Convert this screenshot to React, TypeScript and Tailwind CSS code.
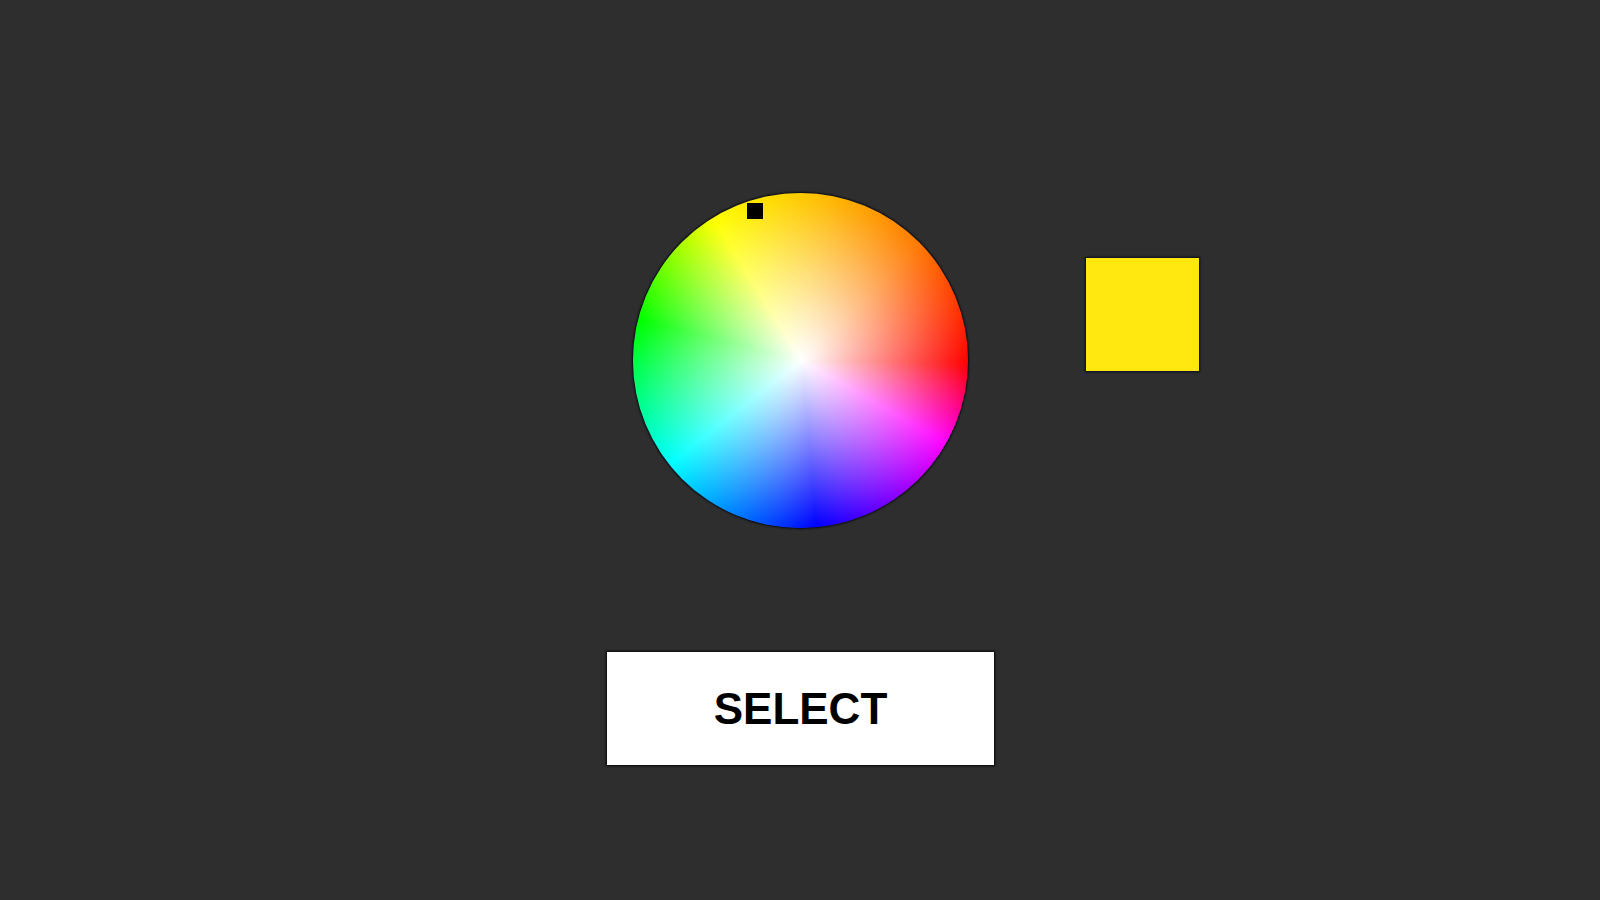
const wheel =
  "bg-[radial-gradient(circle_closest-side_at_50.5%_50%,rgba(255,255,255,1),rgba(255,255,255,0)),conic-gradient(from_91deg_at_50.5%_50%,#ff0000_0deg,#ff00ff_29deg,#0000ff_84deg,#00ffff_141deg,#00ff00_193deg,#ffff00_237deg,#ffc800_269deg,#ff7800_314deg,#ff0000_360deg)]";

function ColorWheel() {
  return (
    <div
      role="img"
      aria-label="Color wheel"
      className={`relative size-[335px] rounded-full shadow-[0_0_2px_1px_#060a12] ${wheel}`}
    >
      <span className="absolute left-[34%] top-[3%] size-4 bg-black" />
    </div>
  );
}

export default function App() {
  return (
    <main className="flex min-h-screen flex-col items-center gap-[124px] bg-[#2e2e2e] pt-[193px] pb-32 pl-px font-['Liberation_Sans',Arial,sans-serif]">
      <div className="grid w-full grid-cols-[1fr_auto_1fr] items-start">
        <span />
        <ColorWheel />
        <output
          aria-label="Selected color"
          className="mt-[65px] ml-[118px] block size-[113px] bg-[#ffe70f] shadow-[0_0_2px_1px_#060c22]"
        />
      </div>
      <button
        type="button"
        className="h-[113px] w-[387px] bg-white text-[44px] leading-none font-bold text-black shadow-[0_0_2px_1px_#080808]"
      >
        SELECT
      </button>
    </main>
  );
}
